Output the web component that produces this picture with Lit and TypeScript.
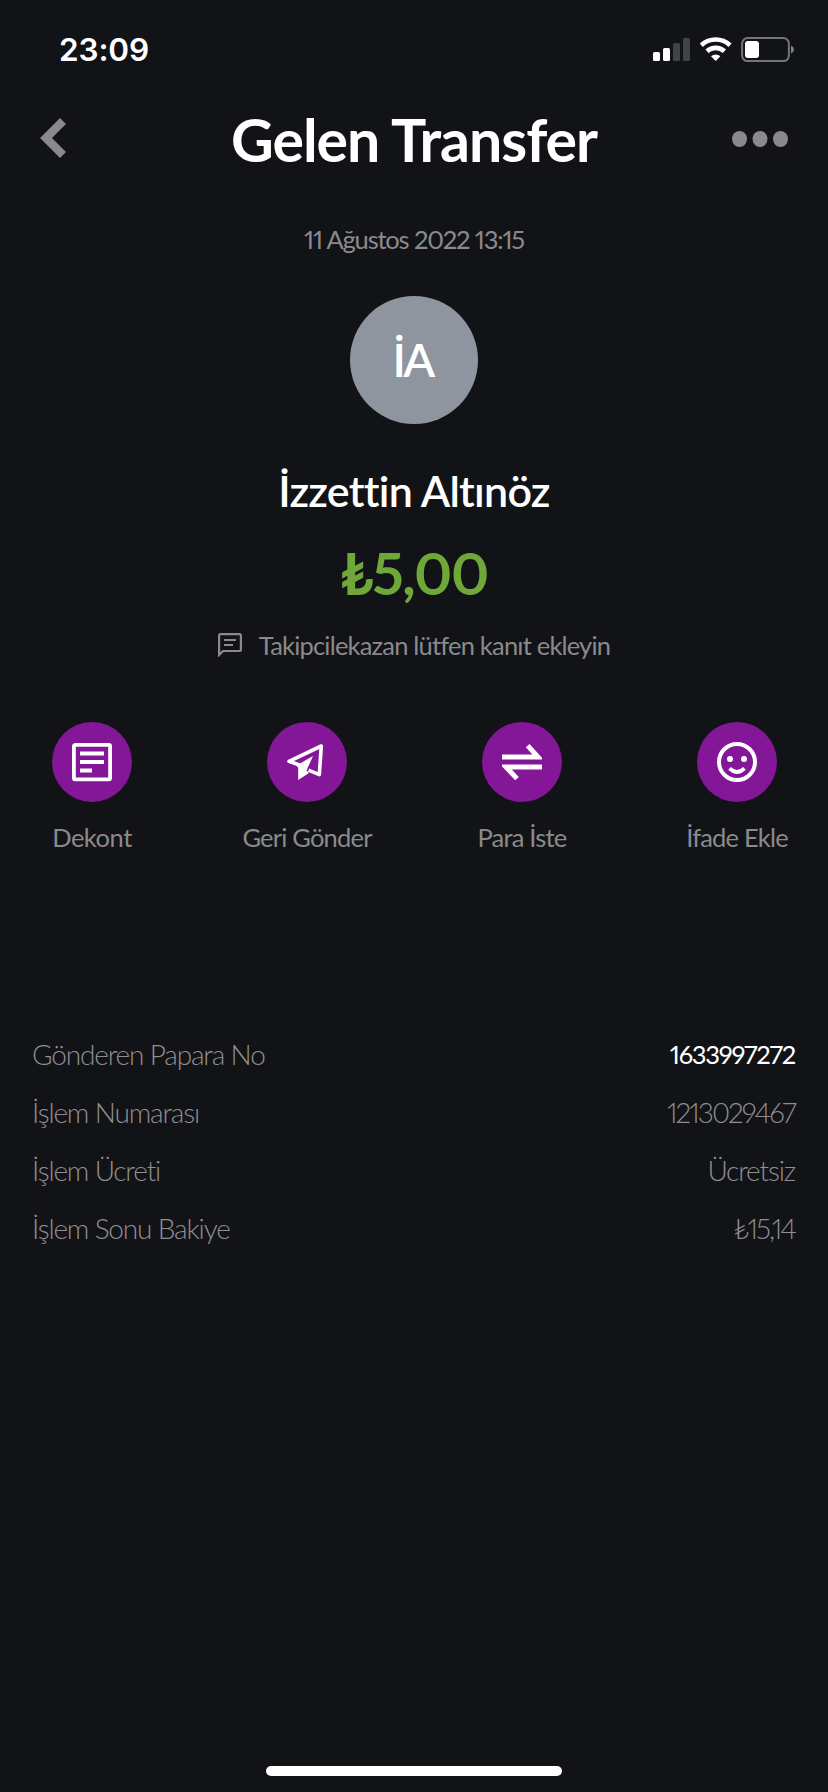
import { LitElement, html, css, svg } from "lit";
import { customElement } from "lit/decorators.js";

const actions = [
  { label: "Dekont", cls: "dekont", icon: svg`<rect x="1.9" y="2.9" width="36.2" height="34.4" rx="1.4" fill="none" stroke="#fff" stroke-width="3.8"/><path d="M8 11.5H32M8 20H32M8 28.5H20" stroke="#fff" stroke-width="4"/>` },
  { label: "Geri Gönder", cls: "geri", icon: svg`<path d="M12.5 23L2 19.3L34.3 4L32.3 32.6L21.5 28.2" fill="none" stroke="#fff" stroke-width="3.6" stroke-linejoin="round"/><path d="M26 14L9.5 23.5L11.2 26V38L22 31L19.5 28.5Z" fill="#fff"/>` },
  { label: "Para İste", cls: "para", icon: svg`<path d="M0 15H36L25.7 3.6M40 25H4L15 36.6" fill="none" stroke="#fff" stroke-width="5"/>` },
  { label: "İfade Ekle", cls: "ifade", icon: svg`<circle cx="20" cy="20" r="18" fill="none" stroke="#fff" stroke-width="4"/><circle cx="13" cy="17" r="3"/><circle cx="27" cy="17" r="3"/><path d="M12.6 26.4Q20 33.6 27.4 26.4" fill="none" stroke="#fff" stroke-width="3.8"/>` },
];

const rows = [
  { label: "Gönderen Papara No", value: "1633997272", cls: "strong" },
  { label: "İşlem Numarası", value: "1213029467", cls: "number" },
  { label: "İşlem Ücreti", value: "Ücretsiz", cls: "" },
  { label: "İşlem Sonu Bakiye", value: "₺15,14", cls: "money" },
];

@customElement("app-root")
export class AppRoot extends LitElement {
  static styles = css`
    :host { display: flex; flex-direction: column; align-items: stretch; box-sizing: border-box; height: 1792px; background: #121317; color: #fff; font-family: "Lato", "Open Sans", sans-serif; font-variant-numeric: proportional-nums; white-space: nowrap; overflow: hidden; }
    .status { height: 99px; padding: 0 34px 0 59px; display: flex; justify-content: space-between; align-items: center; }
    .time { font: 600 31.5px "Inter", sans-serif; letter-spacing: -0.12px; }
    .nav { margin-top: 11px; height: 60px; padding: 0 40px; display: grid; grid-template-columns: 56px 1fr 56px; align-items: center; }
    .title { margin: 0; text-align: center; font-size: 59px; line-height: 60px; font-weight: 700; letter-spacing: -1px; }
    .back { margin-top: -5px; }
    .more { margin-top: -2px; }
    svg { display: block; }
    .summary { display: flex; flex-direction: column; align-items: center; }
    .date { margin-top: 53px; font-size: 25.5px; line-height: 32px; letter-spacing: -1.2px; word-spacing: 0.2px; color: #8a8a8c; }
    .avatar { margin-top: 41px; width: 128px; height: 128px; border-radius: 50%; background: #8e959f; display: flex; align-items: center; justify-content: center; font-size: 46.5px; font-weight: 600; letter-spacing: -2.7px; }
    .avatar span { padding: 0 3px 2px 0; }
    .name { margin-top: 42px; font-size: 43px; line-height: 50px; font-weight: 600; letter-spacing: -0.72px; }
    .amount { margin-top: 27px; font-size: 57.5px; line-height: 60px; font-weight: 700; letter-spacing: -1.4px; color: #6fa838; }
    .note { margin-top: 26px; display: flex; align-items: center; gap: 17px; font-size: 25.5px; line-height: 32px; letter-spacing: -0.8px; color: #8a8a8c; }
    .actions { margin-top: 61px; padding: 0 51px 0 52px; display: flex; justify-content: space-between; }
    .action { width: 80px; display: flex; flex-direction: column; align-items: center; }
    .disc { width: 80px; height: 80px; border-radius: 50%; background: #831797; fill: #fff; display: flex; align-items: center; justify-content: center; }
    .label { margin-top: 19px; font-size: 25.5px; line-height: 32px; letter-spacing: -0.8px; color: #8a8a8c; }
    .dekont { letter-spacing: -0.48px; }
    .details { margin-top: 172px; padding: 0 33px 0 32px; }
    .row { height: 58px; display: flex; justify-content: space-between; align-items: center; font-size: 28px; line-height: 58px; font-weight: 300; letter-spacing: -1.16px; color: #8f8f91; }
    .strong { font-size: 25.5px; font-weight: 400; color: #fff; letter-spacing: -1.25px; }
    .number { letter-spacing: -1.95px; }
    .money { letter-spacing: -2px; }
    .home { margin: auto auto 16px; width: 296px; height: 10px; border-radius: 5px; background: #fff; }
  `;
  render() {
    return html`
      <div class="status">
        <span class="time">23:09</span>
        <svg width="141" height="25" viewBox="0 0 141 25" fill="#fff">
          <rect x="0" y="15" width="7" height="9" rx="1.5"/><rect x="10" y="11" width="7" height="13" rx="1.5"/>
          <rect x="20" y="6" width="7" height="18" rx="1.5" fill="#424347"/><rect x="30" y="1" width="7" height="23" rx="1.5" fill="#424347"/>
          <g fill="none" stroke="#fff" stroke-width="4.6"><path d="M48.3 8.2A21 21 0 0 1 77 8.2"/><path d="M54 14.3A12.8 12.8 0 0 1 71.4 14.3"/></g>
          <path d="M62.7 24L58 19.2A7 7 0 0 1 67.4 19.2Z"/>
          <rect x="89.1" y="1.1" width="46.8" height="23" rx="5.5" fill="none" stroke="#74757a" stroke-width="2"/>
          <rect x="92" y="4" width="14" height="17" rx="3"/><path d="M138 8.5Q141 9.8 141 12.5T138 16.5Z" fill="#7f8083"/>
        </svg>
      </div>
      <div class="nav">
        <svg class="back" width="26" height="40" viewBox="0 0 26 40"><path d="M23 3L6 20L23 37" fill="none" stroke="#8a8a8c" stroke-width="8.4"/></svg>
        <h1 class="title">Gelen Transfer</h1>
        <svg class="more" width="56" height="16" viewBox="0 0 56 16" fill="#8a8a8c"><ellipse cx="7.5" cy="8" rx="7.5" ry="8"/><ellipse cx="28" cy="8" rx="7.5" ry="8"/><ellipse cx="48.5" cy="8" rx="7.5" ry="8"/></svg>
      </div>
      <div class="summary">
        <div class="date">11 Ağustos 2022 13:15</div>
        <div class="avatar"><span>İA</span></div>
        <div class="name">İzzettin Altınöz</div>
        <div class="amount">₺5,00</div>
        <div class="note">
          <svg width="24" height="24" viewBox="0 0 24 24" fill="none" stroke="#8a8a8c" stroke-width="2.2"><path d="M1.1 22V2.5Q1.1 1.1 2.5 1.1H21.5Q22.9 1.1 22.9 2.5V16.5Q22.9 18 21.5 18H5Z"/><path d="M6 7H18M6 12H15"/></svg>
          <span>Takipcilekazan lütfen kanıt ekleyin</span>
        </div>
      </div>
      <div class="actions">
        ${actions.map((a) => html`<div class="action"><div class="disc"><svg width="40" height="40" viewBox="0 0 40 40">${a.icon}</svg></div><span class="label ${a.cls}">${a.label}</span></div>`)}
      </div>
      <div class="details">
        ${rows.map((r) => html`<div class="row"><span>${r.label}</span><span class=${r.cls}>${r.value}</span></div>`)}
      </div>
      <div class="home"></div>
    `;
  }
}
